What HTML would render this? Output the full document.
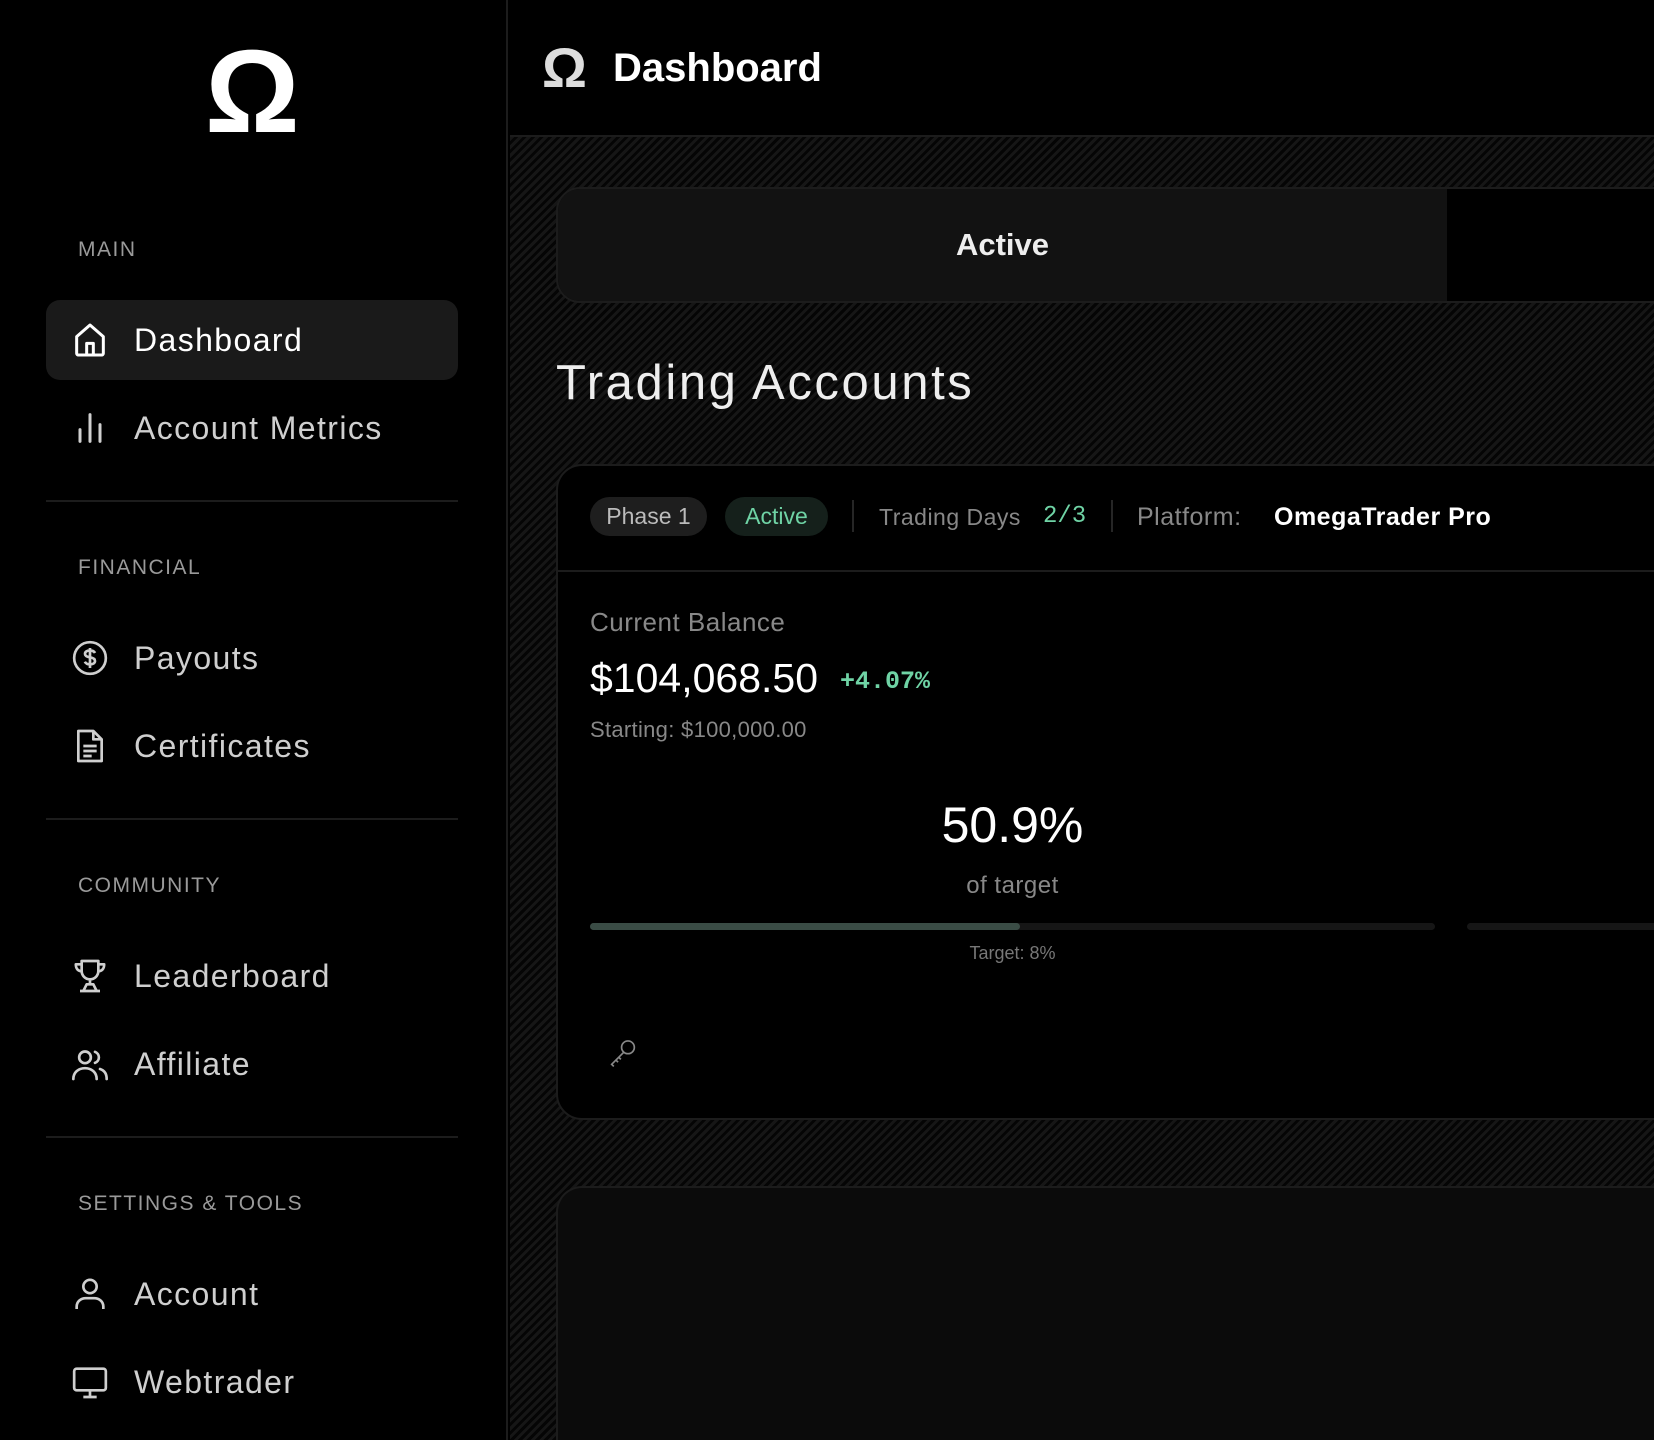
<!DOCTYPE html>
<html><head><meta charset="utf-8"><style>
*{margin:0;padding:0;box-sizing:border-box}
html,body{width:1654px;height:1440px;overflow:hidden}
body{background:#000;font-family:"Liberation Sans",sans-serif;color:#fff;position:relative}
.sb{position:absolute;left:0;top:0;width:508px;height:1440px;background:#000;border-right:2px solid #1c1c1c}
.lbl{position:absolute;left:78px;font-size:21px;letter-spacing:1.5px;color:#9a9a9a}
.it{position:absolute;left:46px;width:412px;height:80px;display:flex;align-items:center;font-size:32px;color:#cfcfcf;letter-spacing:1.4px}
.it svg{position:absolute;left:24px;width:40px;height:40px}
.it span{position:absolute;left:88px}
.it.act{background:#1a1a1a;border-radius:14px;color:#fff}
.dv{position:absolute;left:46px;width:412px;height:2px;background:#1c1c1c}
.hd{position:absolute;left:510px;top:0;width:1144px;height:137px;background:#000;border-bottom:2px solid #1c1c1c}
.main{position:absolute;left:510px;top:137px;width:1144px;height:1303px;overflow:hidden;background:repeating-linear-gradient(135deg,#161616 0 3px,#050505 3px 6px)}
.abs{position:absolute}
</style></head><body>
<div class="sb">
  <div class="abs" style="left:205px;top:33px;font-size:118px;font-weight:bold;line-height:1;color:#fff">Ω</div>
  <div class="lbl" style="top:238px">MAIN</div>
  <div class="it act" style="top:300px"><svg viewBox="0 0 24 24" fill="none" stroke="#fff" stroke-width="1.8" stroke-linejoin="round"><path d="M4 10 12 3l8 7v10a1 1 0 0 1-1 1H5a1 1 0 0 1-1-1z"/><path d="M10 21v-7h4v7"/></svg><span>Dashboard</span></div>
  <div class="it" style="top:388px"><svg viewBox="0 0 24 24" fill="none" stroke="#cfcfcf" stroke-width="1.8" stroke-linecap="round"><path d="M6 20v-7M12 20V4M18 20v-10"/></svg><span>Account Metrics</span></div>
  <div class="dv" style="top:500px"></div>
  <div class="lbl" style="top:556px">FINANCIAL</div>
  <div class="it" style="top:618px"><svg viewBox="0 0 24 24" fill="none" stroke="#cfcfcf" stroke-width="1.6"><circle cx="12" cy="12" r="9.5"/><path d="M15 9c-.5-1-1.6-1.5-3-1.5-1.8 0-3 .8-3 2s1.2 1.8 3 2.1 3 .9 3 2.2-1.3 2-3 2-2.6-.6-3.1-1.6M12 6v12"/></svg><span>Payouts</span></div>
  <div class="it" style="top:706px"><svg viewBox="0 0 24 24" fill="none" stroke="#cfcfcf" stroke-width="1.6" stroke-linejoin="round"><path d="M5 3h9l5 5v13H5z"/><path d="M14 3v5h5M8 12h8M8 15h8M8 18h5"/></svg><span>Certificates</span></div>
  <div class="dv" style="top:818px"></div>
  <div class="lbl" style="top:874px">COMMUNITY</div>
  <div class="it" style="top:936px"><svg viewBox="0 0 24 24" fill="none" stroke="#cfcfcf" stroke-width="1.6" stroke-linejoin="round"><path d="M7 3h10v6a5 5 0 0 1-10 0zM7 5H3.5c0 3 1.5 4 3.8 4.3M17 5h3.5c0 3-1.5 4-3.8 4.3M12 14v3M8 21l2-4h4l2 4zM6 21h12"/></svg><span>Leaderboard</span></div>
  <div class="it" style="top:1024px"><svg viewBox="0 0 24 24" fill="none" stroke="#cfcfcf" stroke-width="1.6" stroke-linecap="round"><circle cx="9" cy="8" r="3.5"/><path d="M2 21c0-4 3-6.5 7-6.5s7 2.5 7 6.5M15 4.7a3.5 3.5 0 0 1 0 6.6M18 15c2.5.8 4 2.8 4 6"/></svg><span>Affiliate</span></div>
  <div class="dv" style="top:1136px"></div>
  <div class="lbl" style="top:1192px">SETTINGS &amp; TOOLS</div>
  <div class="it" style="top:1254px"><svg viewBox="0 0 24 24" fill="none" stroke="#cfcfcf" stroke-width="1.6"><circle cx="12" cy="7.5" r="4"/><path d="M4 21v-1.5c0-3 2.5-5 5.5-5h5c3 0 5.5 2 5.5 5V21"/></svg><span>Account</span></div>
  <div class="it" style="top:1342px"><svg viewBox="0 0 24 24" fill="none" stroke="#cfcfcf" stroke-width="1.6" stroke-linejoin="round"><rect x="2.5" y="4" width="19" height="13" rx="1.5"/><path d="M12 17v4M8 21h8"/></svg><span>Webtrader</span></div>
</div>
<div class="hd">
  <div class="abs" style="left:32px;top:40px;font-size:56px;font-weight:bold;line-height:1;color:#ddd">Ω</div>
  <div class="abs" style="left:103px;top:48px;font-size:40px;font-weight:bold;line-height:1">Dashboard</div>
</div>
<div class="main">
  <div class="abs" style="left:46px;top:50px;width:1140px;height:116px;border:2px solid #1c1c1c;border-radius:24px;background:#000;overflow:hidden">
    <div class="abs" style="left:0;top:0;width:889px;height:112px;background:#121212"></div>
    <div class="abs" style="left:0;width:889px;top:38px;text-align:center;font-size:31px;font-weight:bold;color:#eee">Active</div>
  </div>
  <div class="abs" style="left:46px;top:218px;font-size:49px;color:#eee;letter-spacing:2.6px">Trading Accounts</div>
  <div class="abs" style="left:46px;top:327px;width:1140px;height:656px;border:2px solid #1c1c1c;border-radius:26px;background:#000">
    <div class="abs" style="left:0;right:0;top:104px;height:2px;background:#1c1c1c"></div>
    <div class="abs" style="left:32px;top:31px;width:117px;height:39px;border-radius:20px;background:#1e1e1e;color:#bbb;font-size:23px;text-align:center;line-height:39px">Phase 1</div>
    <div class="abs" style="left:167px;top:31px;width:103px;height:39px;border-radius:20px;background:#15201b;color:#6fd3a5;font-size:23px;text-align:center;line-height:39px">Active</div>
    <div class="abs" style="left:294px;top:34px;width:2px;height:32px;background:#262626"></div>
    <div class="abs" style="left:321px;top:38px;font-size:23px;color:#888;letter-spacing:.5px">Trading Days</div>
    <div class="abs" style="left:485px;top:37px;font-size:24px;color:#6fd3a5;font-family:'Liberation Mono',monospace">2/3</div>
    <div class="abs" style="left:553px;top:34px;width:2px;height:32px;background:#262626"></div>
    <div class="abs" style="left:579px;top:37px;font-size:25px;color:#888;letter-spacing:.5px">Platform:</div>
    <div class="abs" style="left:716px;top:37px;font-size:25px;font-weight:bold;color:#fff;letter-spacing:.5px">OmegaTrader Pro</div>
    <div class="abs" style="left:32px;top:141px;font-size:26px;color:#888;letter-spacing:.5px">Current Balance</div>
    <div class="abs" style="left:32px;top:189px;font-size:41px;color:#fff">$104,068.50</div>
    <div class="abs" style="left:282px;top:201px;font-size:25px;color:#6fd3a5;font-family:'Liberation Mono',monospace;font-weight:bold">+4.07%</div>
    <div class="abs" style="left:32px;top:251px;font-size:22px;color:#888;letter-spacing:.3px">Starting: $100,000.00</div>
    <div class="abs" style="left:32px;width:845px;top:330px;text-align:center;font-size:50px;color:#fff">50.9%</div>
    <div class="abs" style="left:32px;width:845px;top:406px;text-align:center;font-size:24px;color:#888;letter-spacing:.5px">of target</div>
    <div class="abs" style="left:32px;top:457px;width:845px;height:7px;border-radius:4px;background:#161616"></div>
    <div class="abs" style="left:32px;top:457px;width:430px;height:7px;border-radius:4px;background:#3a4c45"></div>
    <div class="abs" style="left:909px;top:457px;width:200px;height:7px;border-radius:4px;background:#161616"></div>
    <div class="abs" style="left:32px;width:845px;top:477px;text-align:center;font-size:18px;color:#777">Target: 8%</div>
    <svg class="abs" style="left:48px;top:570px" width="34" height="34" viewBox="0 0 24 24" fill="none" stroke="#888" stroke-width="1.2"><circle cx="15.5" cy="8" r="4.5"/><path d="M12.5 11.5 4 20l1.5 1.5M7 17l1.5 1.5M9 15l1.5 1.5"/></svg>
  </div>
  <div class="abs" style="left:46px;top:1049px;width:1140px;height:254px;border:2px solid #1c1c1c;border-bottom:none;border-radius:26px 26px 0 0;background:#0b0b0b"></div>
</div>
</body></html>
